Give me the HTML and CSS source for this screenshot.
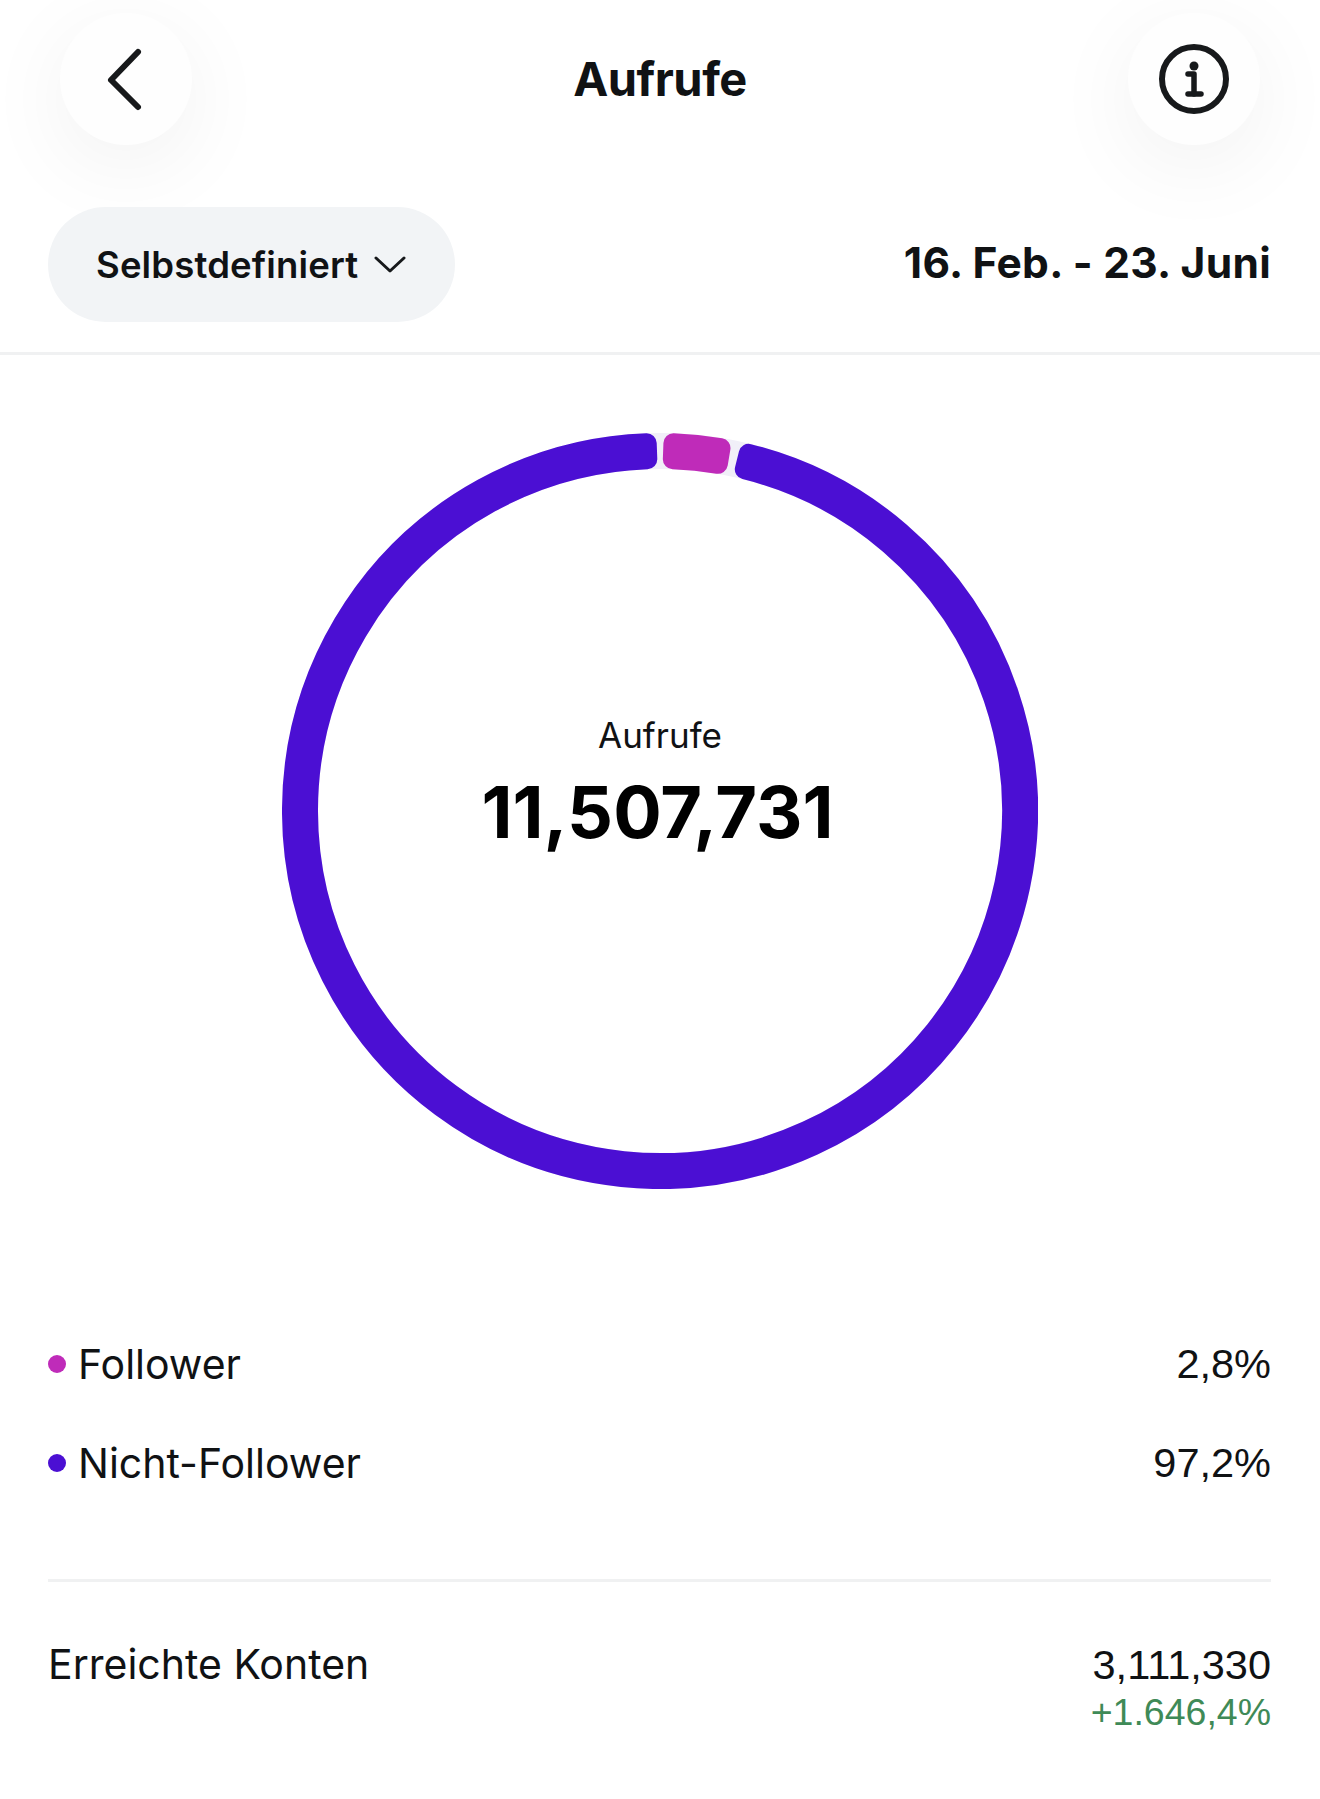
FILE: index.html
```html
<!DOCTYPE html>
<html lang="de">
<head>
    <meta charset="UTF-8">
    <meta name="viewport" content="width=device-width, initial-scale=1.0">
    <title>Aufrufe</title>
    <link rel="stylesheet" href="styles.css">
</head>
<body>
    <header class="top-bar">
        <div class="round-btn">
            <svg width="132" height="132" viewBox="0 0 132 132" class="back-icon">
                <polyline points="78,39 51,67 78,94"/>
            </svg>
        </div>
        <h1 class="top-title">Aufrufe</h1>
        <div class="round-btn">
            <svg width="132" height="132" viewBox="0 0 132 132" class="info-icon">
                <circle cx="66" cy="66" r="32"/>
                <circle class="info-dot" cx="66" cy="53" r="4.5"/>
                <polyline points="60,61 66,61 66,81"/>
                <line x1="60" y1="81" x2="73" y2="81"/>
            </svg>
        </div>
    </header>

    <div class="filter-row">
        <div class="filter-pill">
            <span>Selbstdefiniert</span>
            <svg width="32" height="20" viewBox="0 0 32 20" class="chevron">
                <polyline points="2,3 16,16 30,3"/>
            </svg>
        </div>
        <div class="date-range">16. Feb. - 23. Juni</div>
    </div>

    <section class="chart">
        <div class="ring">
            <svg width="756" height="756" viewBox="0 0 756 756" class="ring-svg">
                <circle class="ring-track" cx="378" cy="378" r="360"/>
                <path class="seg seg-purple" d="M466.65 20.84 A368 368 0 1 1 364.71 10.24 L365.29 26.23 A352 352 0 1 0 462.8 36.37 Z"/>
                <path class="seg seg-pink" d="M391.42 10.25 A368 368 0 0 1 438.48 15 L435.85 30.79 A352 352 0 0 0 390.84 26.24 Z"/>
            </svg>
            <div class="ring-text">
                <div class="ring-label">Aufrufe</div>
                <div class="ring-value">11,507,731</div>
            </div>
        </div>
    </section>

    <section class="legend">
        <div class="row">
            <div class="row-name"><span class="dot dot-pink"></span>Follower</div>
            <div class="row-num">2,8%</div>
        </div>
        <div class="row">
            <div class="row-name"><span class="dot dot-purple"></span>Nicht-Follower</div>
            <div class="row-num">97,2%</div>
        </div>
    </section>

    <section class="stats">
        <div class="row stats-row">
            <div class="row-name">Erreichte Konten</div>
            <div class="stats-nums">
                <div class="row-num">3,111,330</div>
                <div class="row-change">+1.646,4%</div>
            </div>
        </div>
    </section>
</body>
</html>
```

FILE: styles.css
```css
:root {
    --purple: #4b0fd3;
    --pink: #bf2bb9;
    --ink: #101214;
    --line: #f0f1f2;
}
body {
    margin: 0;
    min-height: 1799px;
    background-color: #fff;
    color: var(--ink);
    font-family: Inter, "Liberation Sans", sans-serif;
}

/* top bar */
.top-bar {
    display: flex;
    justify-content: space-between;
    align-items: center;
    padding: 13px 60px 0;
}
.top-title {
    margin: 0 0 2px;
    font-size: 47px;
    font-weight: 700;
    letter-spacing: -0.5px;
}
.round-btn {
    width: 132px;
    height: 132px;
    border-radius: 50%;
    background-color: #fefefe;
    box-shadow: 0 20px 90px rgba(0, 0, 0, 0.06);
}
.round-btn svg {
    display: block;
}
.back-icon polyline {
    fill: none;
    stroke: #17191b;
    stroke-width: 6;
    stroke-linecap: round;
    stroke-linejoin: round;
}
.info-icon circle,
.info-icon polyline,
.info-icon line {
    fill: none;
    stroke: #17191b;
    stroke-width: 6;
}
.info-icon polyline,
.info-icon line {
    stroke-width: 5.5;
    stroke-linecap: round;
    stroke-linejoin: round;
}
.info-icon .info-dot {
    fill: #17191b;
    stroke: none;
}

/* filter row */
.filter-row {
    display: flex;
    justify-content: space-between;
    align-items: center;
    margin-top: 62px;
    padding: 0 49px 30px 48px;
    border-bottom: 3px solid var(--line);
}
.filter-pill {
    display: flex;
    align-items: center;
    gap: 16px;
    width: 407px;
    height: 115px;
    box-sizing: border-box;
    padding-left: 48px;
    border-radius: 58px;
    background-color: #f2f4f6;
    font-size: 36.5px;
    font-weight: 600;
    letter-spacing: 0.15px;
}
.chevron polyline {
    fill: none;
    stroke: #17191b;
    stroke-width: 3;
    stroke-linecap: round;
    stroke-linejoin: round;
}
.date-range {
    margin-bottom: 4px;
    font-size: 42.5px;
    font-weight: 700;
    letter-spacing: 0.28px;
}

/* ring chart */
.chart {
    display: flex;
    justify-content: center;
    padding-top: 78px;
}
.ring {
    display: grid;
    width: 756px;
    height: 756px;
}
.ring-svg,
.ring-text {
    grid-area: 1 / 1;
}
.ring-svg {
    display: block;
}
.ring-track {
    fill: none;
    stroke: #f1eff8;
    stroke-width: 36;
}
.seg {
    stroke-width: 20;
    stroke-linejoin: round;
}
.seg-purple {
    fill: var(--purple);
    stroke: var(--purple);
}
.seg-pink {
    fill: var(--pink);
    stroke: var(--pink);
}
.ring-text {
    align-self: center;
    margin-bottom: 54px;
    text-align: center;
}
.ring-label {
    font-size: 35px;
    line-height: 42px;
}
.ring-value {
    margin-top: 13px;
    padding-right: 5px;
    font-size: 72px;
    line-height: 86px;
    font-weight: 700;
    color: #000;
}

/* legend and stats */
.legend {
    display: flex;
    flex-direction: column;
    gap: 49px;
    margin-top: 150px;
    padding: 0 49px 91px 48px;
}
.row {
    display: flex;
    justify-content: space-between;
    align-items: center;
    height: 50px;
}
.row-name {
    display: flex;
    align-items: center;
    font-size: 41px;
}
.row-num {
    font-family: "Liberation Sans", sans-serif;
    font-size: 41.5px;
}
.dot {
    width: 18px;
    height: 18px;
    margin-right: 12px;
    border-radius: 50%;
}
.dot-pink {
    background-color: var(--pink);
}
.dot-purple {
    background-color: var(--purple);
}
.stats {
    margin: 0 49px 0 48px;
    padding-top: 59px;
    border-top: 3px solid var(--line);
}
.stats-row {
    align-items: flex-start;
    height: auto;
}
.stats-row .row-name {
    margin-top: -2px;
}
.stats-nums {
    text-align: right;
}
.row-change {
    margin-top: 2px;
    font-family: "Liberation Sans", sans-serif;
    font-size: 37.5px;
    color: #3f8a57;
}
```
